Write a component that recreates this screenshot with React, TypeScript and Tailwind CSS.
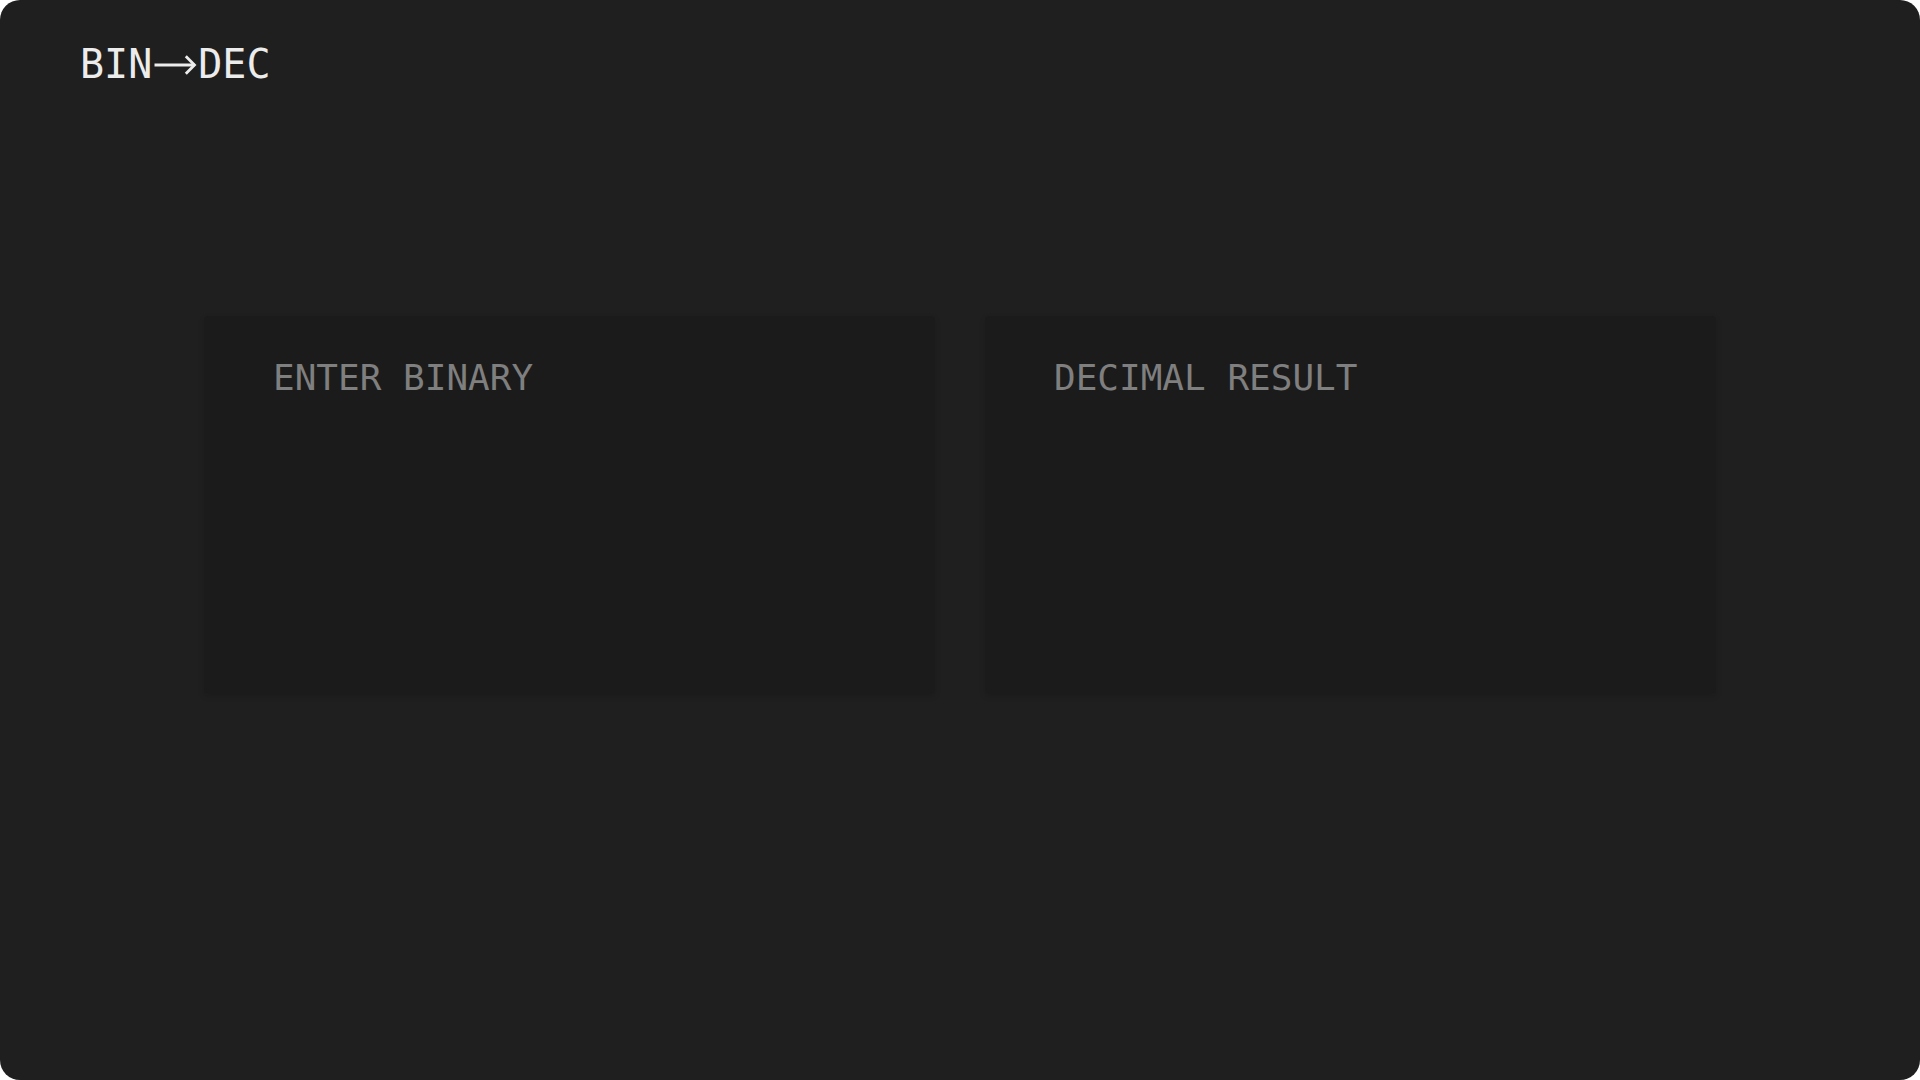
import React from "react";

const mono = { fontFamily: '"DejaVu Sans Mono", "Liberation Mono", monospace' };

function Arrow() {
  return (
    <svg width="46" height="40" viewBox="0 0 46 40" className="shrink-0" aria-hidden>
      <path d="M2.5 21 H42.5" stroke="#ececec" strokeWidth="2.8" fill="none" />
      <path d="M33.8 12.3 L42.5 21 L33.8 29.7" stroke="#ececec" strokeWidth="2.8" fill="none" />
    </svg>
  );
}

function Panel({ label }: { label: string }) {
  return (
    <section className="h-[377px] rounded-[4px] bg-[#1b1b1b] pl-[69px] pt-[44px] shadow-[0_3px_6px_rgba(0,0,0,0.15)]">
      <h2 className="text-[36px] leading-none text-[#7f7f7f]" style={mono}>
        {label}
      </h2>
    </section>
  );
}

export default function App() {
  return (
    <div className="bg-white">
      <div className="flex h-[1080px] flex-col overflow-hidden rounded-[20px] bg-[#1f1f1f]">
        <header className="pl-[80px] pt-[44px]">
          <div className="flex items-center text-[40px] leading-none text-[#ececec]" style={mono}>
            <span>BIN</span>
            <Arrow />
            <span>DEC</span>
          </div>
        </header>
        <main className="mx-auto mt-[232px] grid w-[1512px] grid-cols-2 gap-[50px]">
          <Panel label="ENTER BINARY" />
          <Panel label="DECIMAL RESULT" />
        </main>
      </div>
    </div>
  );
}
